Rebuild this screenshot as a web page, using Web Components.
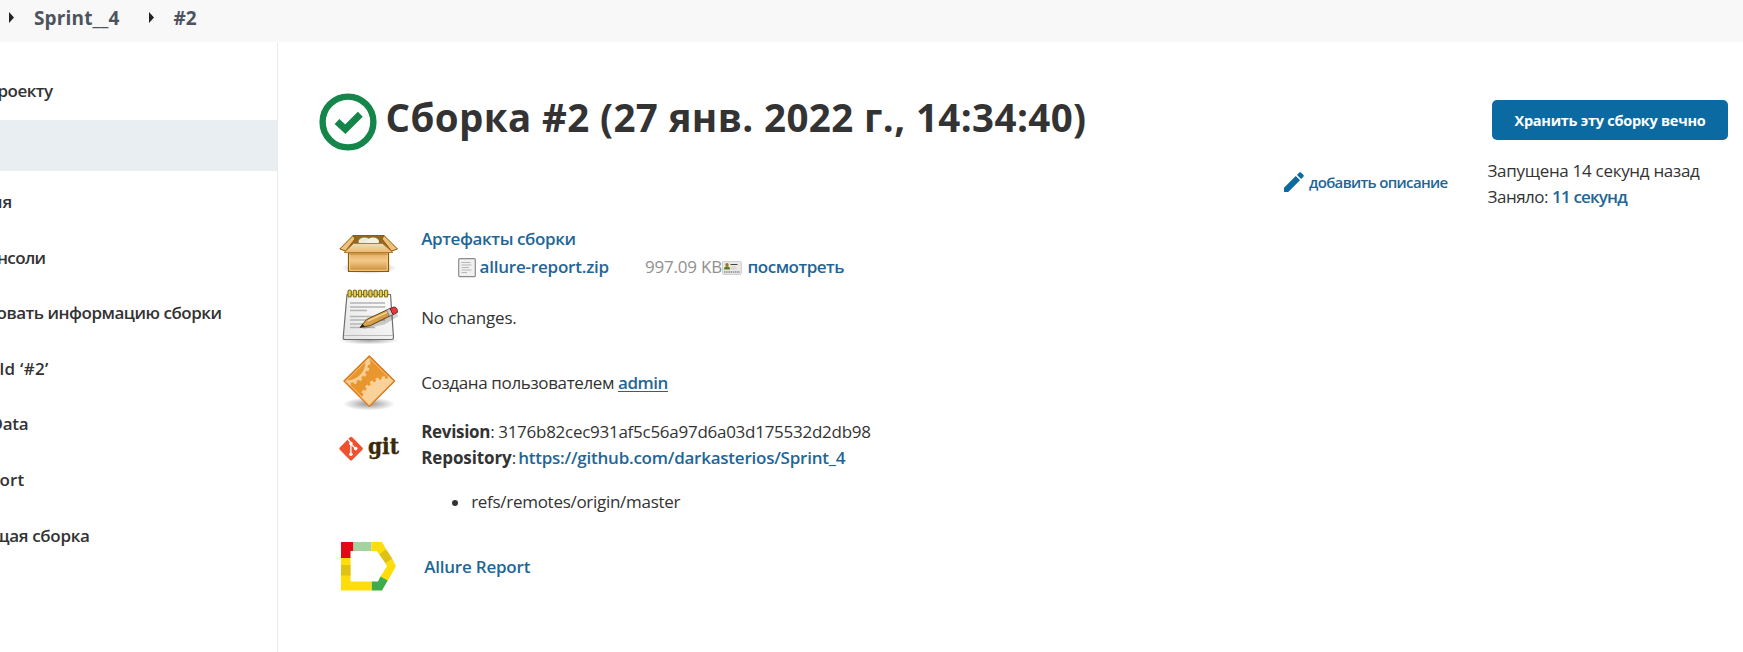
<!DOCTYPE html>
<html lang="ru">
<head>
<meta charset="utf-8">
<title>Сборка #2</title>
<style>
html,body{margin:0;height:100%;overflow:hidden;background:#fff}
body{font-family:"Open Sans","Noto Sans",sans-serif;color:#333}
</style>
</head>
<body>
<build-page></build-page>
<script>
const define = (name, html, ready) => customElements.define(name, class extends HTMLElement {
  constructor() {
    super();
    this.attachShadow({ mode: 'open' });
    const t = document.createElement('template');
    t.innerHTML = html;
    this.shadowRoot.append(t.content.cloneNode(true));
  }
  connectedCallback() { if (ready) ready(this); }
});

// A run of text tracked so that it fills the width given in "w".
define('fit-text', `<style>
:host{display:inline-block;white-space:pre;flex:none;line-height:26px;height:26px;font-size:17px}
:host([link]){color:#1f6696;font-weight:600}
:host([strong]){font-weight:700}
:host([under]) span{text-decoration:underline;text-decoration-thickness:1px;text-underline-offset:2px}
</style><span><slot></slot></span>`, el => {
  const w = +el.getAttribute('w');
  const span = el.shadowRoot.querySelector('span');
  const natural = span.getBoundingClientRect().width;
  span.style.letterSpacing = ((w - natural) / el.textContent.length) + 'px';
  el.style.width = w + 'px';
});

define('crumb-bar', `<style>
:host{display:flex;height:42px;background:#f8f8f8;color:#4d545d;box-sizing:border-box;padding:4px 0 0 9px;align-items:flex-start}
svg{width:5px;height:11px;margin-top:8px;flex:none}
fit-text{font-size:19px;font-weight:700;margin-top:1px}
.a{margin:1px 29px 0 20px}.b{margin-left:20px}
</style>
<svg viewBox="0 0 5 11"><path d="M0 0L5 5.5L0 11Z" fill="#222"/></svg>
<fit-text class="a" w="85.5">Sprint__4</fit-text>
<svg viewBox="0 0 5 11"><path d="M0 0L5 5.5L0 11Z" fill="#222"/></svg>
<fit-text class="b" w="23">#2</fit-text>`);

define('side-item', `<style>
:host{display:flex;height:51px;align-items:center;overflow:hidden;font-weight:600;padding-top:2px;box-sizing:border-box}
:host([active]){background:#e9eef2}
</style><slot></slot>`);

define('side-panel', `<style>
:host{display:flex;flex-direction:column;gap:4.6px;width:277px;flex:none;box-sizing:content-box;border-right:1px solid #e9eaec;padding-top:22.4px}
</style>
<side-item><fit-text w="55" style="margin-left:-2.5px">роекту</fit-text></side-item>
<side-item active></side-item>
<side-item><fit-text w="21" style="margin-left:-9px">ия</fit-text></side-item>
<side-item><fit-text w="48.5" style="margin-left:-3px">нсоли</fit-text></side-item>
<side-item><fit-text w="225" style="margin-left:-3.5px">овать информацию сборки</fit-text></side-item>
<side-item><fit-text w="49" style="margin-left:-.5px">ld ‘#2’</fit-text></side-item>
<side-item><fit-text w="38" style="margin-left:-9.5px">Data</fit-text></side-item>
<side-item><fit-text w="25" style="margin-left:-.5px">ort</fit-text></side-item>
<side-item><fit-text w="96" style="margin-left:-6.5px">щая сборка</fit-text></side-item>`);

define('build-title', `<style>
:host{display:flex;height:58px;align-items:flex-start}
svg{width:58px;height:58px;flex:none}
fit-text{font-size:38.5px;line-height:50px;height:50px;font-weight:700;margin:-1px 0 0 8.5px}
</style>
<svg viewBox="0 0 58 58"><circle cx="29" cy="29" r="25.4" fill="none" stroke="#15864a" stroke-width="6.4"/><path d="M18 28.500L26.300 36.200L41.300 21.200" fill="none" stroke="#15864a" stroke-width="7"/></svg>
<fit-text w="701">Сборка #2 (27 янв. 2022 г., 14:34:40)</fit-text>`);

define('build-row', `<style>
:host{display:flex}
.i{width:82.200px;flex:none}
.t{flex:1;min-width:0;padding-top:1px}
</style><div class="i"><slot name="icon"></slot></div><div class="t"><slot></slot></div>`);

const icon = (name, body) => define(name, `<style>:host{display:block;width:62px;height:64px}svg{display:block;overflow:visible}text{font:bold 22.500px "DejaVu Serif",serif}</style><svg width="62" height="64" viewBox="0 0 62 64">${body}</svg>`);

icon('icon-box', `<defs><linearGradient id="f" x2="0" y2="1"><stop stop-color="#dda04c"/><stop offset=".5" stop-color="#f3c989"/><stop offset="1" stop-color="#c98a38"/></linearGradient>
<linearGradient id="l" x2="0" y2="1"><stop stop-color="#f7dcae"/><stop offset="1" stop-color="#e8b873"/></linearGradient>
<radialGradient id="s"><stop stop-color="#000" stop-opacity=".4"/><stop offset="1" stop-color="#000" stop-opacity="0"/></radialGradient></defs>
<g transform="translate(0 -2)"><ellipse cx="30" cy="45" rx="28" ry="6" fill="url(#s)"/>
<path d="M14 12.500L45 12.500L53 28L6 28Z" fill="#9a6520" stroke="#8f5902"/>
<ellipse cx="25.500" cy="18.500" rx="6" ry="4" fill="#eee9df"/><ellipse cx="34" cy="18.500" rx="6" ry="4" fill="#f5f1e8"/>
<path d="M14 12.500L.8 26L6.500 28L16 16Z" fill="#edc27e" stroke="#8f5902"/><path d="M45 12.500L58.500 26L52.500 28L43 16Z" fill="#edc27e" stroke="#8f5902"/>
<path d="M9.500 27H49.500V48.500H9.500Z" fill="url(#f)" stroke="#8f5902" stroke-linejoin="round" stroke-width="1.200"/><path d="M10.700 29V47.300H48.300V29" fill="none" stroke="#f5d08f"/>
<path d="M14.500 20.500H43.500L54 29.500H5Z" fill="url(#l)" stroke="#b57a2a" stroke-linejoin="round"/><path d="M10 31H49" stroke="#9c6519" stroke-width="1" opacity=".6"/></g>`);

icon('icon-notes', `<defs><linearGradient id="p" x1="1" y1="0" x2="0" y2="1"><stop stop-color="#fff"/><stop offset="1" stop-color="#e4e4e4"/></linearGradient><linearGradient id="w" x2="1" y2="1"><stop stop-color="#f9d58d"/><stop offset="1" stop-color="#b96f16"/></linearGradient>
<radialGradient id="s"><stop stop-color="#000" stop-opacity=".35"/><stop offset="1" stop-color="#000" stop-opacity="0"/></radialGradient></defs>
<ellipse cx="30" cy="51.500" rx="30" ry="4" fill="url(#s)"/>
<path d="M8 5.500H51.500L54.500 48.500Q54.500 50.500 53 50.500H6Q4 50.500 4.200 48.500Z" fill="url(#p)" stroke="#6d6f6b" stroke-width="1.200" stroke-linejoin="round"/><path d="M5 46.500H54" stroke="#bbb"/>
<path d="M11 14H46M11 18H46M11 21.500H28M11 27.500H46M11 31H46M11 35H30M11 38.500H36" stroke="#b3b5b2" stroke-width="1.300"/>
<g fill="#e6d14e" stroke="#83701b" stroke-width="1.200">${[9,14.2,19.4,24.6,29.8,35,40.2,45.4].map(x => `<rect x="${x}" y="1" width="3.300" height="7" rx="1.600"/>`).join('')}</g>
<path d="M24 37.500L45 33L58 25" stroke="#000" stroke-opacity=".18" stroke-width="5" fill="none"/>
<path d="M21 38.500L27.500 30.500L51 19.500L54 25.500L31.500 36.500Z" fill="url(#w)" stroke="#68450d" stroke-linejoin="round"/><path d="M29 32L52 21.500" stroke="#f6dc9a" stroke-width="1.200"/>
<path d="M21 38.500L23.500 35L26 37.800Z" fill="#222"/>
<path d="M47.500 21.200L51 19.500L54 25.500L50.500 27.200Z" fill="#ccc" stroke="#666" stroke-width=".7"/><path d="M51 19.500L55 18Q59 18.500 58.300 23.500L54 25.500Z" fill="#e33b40" stroke="#7c2223"/>`);

icon('icon-gear', `<defs><radialGradient id="s"><stop stop-color="#000" stop-opacity=".42"/><stop offset="1" stop-color="#000" stop-opacity="0"/></radialGradient><clipPath id="c"><path d="M30.300 2.500L55.300 27L30.300 52L5.500 27Z"/></clipPath></defs>
<ellipse cx="30" cy="50" rx="26" ry="6.500" fill="url(#s)"/>
<path d="M30.300 1.500L56 27L30.300 53L4.500 27Z" fill="#e9962e"/>
<g clip-path="url(#c)" fill="none"><circle cx="8" cy="8" r="19.800" stroke="#f7ce94" stroke-width="2.800"/><circle cx="8" cy="8" r="22" stroke="#f7ce94" stroke-width="2.600" stroke-dasharray="3 3.100"/>
<circle cx="48" cy="50" r="25.500" fill="#f9d29a"/><circle cx="48" cy="50" r="26.300" stroke="#f9d29a" stroke-width="3" stroke-dasharray="3.200 3"/></g>
<path d="M30.300 2L55.600 27L30.300 52.400L5 27Z" fill="none" stroke="#d9791d" stroke-width="1.300" stroke-linejoin="round"/><path d="M30.300 4L53.600 27L30.300 50.400L7 27Z" fill="none" stroke="#f8c682" stroke-width=".9"/>`);

icon('icon-git', `<g transform="translate(-.7 0)"><rect x="4" y="21.800" width="17.600" height="17.600" rx="1.600" transform="rotate(45 12.800 30.600)" fill="#f0502f"/>
<path d="M9.300 21L12.600 24.500V36.500M12.600 26L17.300 30.500" stroke="#fff" stroke-width="1.300" fill="none"/><circle cx="12.600" cy="25.500" r="1.800" fill="#fff"/><circle cx="12.600" cy="36.200" r="1.800" fill="#fff"/><circle cx="17.400" cy="30.600" r="1.800" fill="#fff"/></g>
<text x="29" y="36" fill="#3a2a08" stroke="#3a2a08" stroke-width=".4" textLength="31" lengthAdjust="spacingAndGlyphs">git</text>`);

icon('icon-allure', `<g transform="translate(2 1)"><path d="M0 0H12.500V9H9.500V16H0Z" fill="#e20a17"/><path d="M12.500 0H30.500V9H12.500Z" fill="#a5d3a0"/><path d="M30.500 0H41L45 7L38 12L35.500 9H30.500Z" fill="#ffdd0a"/><path d="M45 7L51.500 17L44.500 21.500L38 12Z" fill="#dfc312"/><path d="M51.500 17L55 24.300L46.700 39L39.500 34.500L46 24.300L44.500 21.500Z" fill="#ffdd0a"/><path d="M39.500 34.500L46.700 38.500L41 48.500H30.500V39.500H37Z" fill="#3ead49"/><path d="M0 16H9.500V39.500H30.500V48.500H0Z" fill="#ffdd0a"/><path d="M0 23H9.500V33.500H0Z" fill="#dfc312"/></g>`);

define('build-log', `<style>
:host{display:flex;flex-direction:column}
.l{display:flex;height:26px;align-items:flex-start}
.art{padding:2px 0 0 36.500px}
svg{flex:none}
.gray{color:#909090}
.dot{width:6px;height:6px;border-radius:50%;background:#333;margin:11px 13px 0 31px}
</style>
<build-row style="height:64px"><icon-box slot="icon"></icon-box>
 <div class="l"><fit-text link w="154.500">Артефакты сборки</fit-text></div>
 <div class="l art"><svg width="18" height="20" viewBox="0 0 18 20" style="margin-top:4px"><rect x=".7" y=".7" width="16.600" height="18" rx="1" fill="#f1f1f1" stroke="#8b8c89" stroke-width="1.200"/><path d="M3.500 4.500H12.500M3.500 7H13.500M3.500 9.500H11M3.500 12H13.500M3.500 14.500H9" stroke="#b6b6b6" stroke-width="1"/></svg>
 <fit-text link w="129.500" style="margin:0 36px 0 3.800px">allure-report.zip</fit-text><fit-text class="gray" w="77">997.09 KB</fit-text>
 <svg width="20" height="14" viewBox="0 0 20 14" style="margin:7px 5px 0 .5px"><rect x=".4" y=".4" width="19" height="13" rx="1.500" fill="#e9e9e8" stroke="#c2c2c0" stroke-width=".8"/><circle cx="5" cy="3.700" r="1.700" fill="#9b7327"/><path d="M2 8.500Q2 5.200 5 5.200Q8 5.200 8 8.500Z" fill="#5f7d1c"/><path d="M8.500 3.500H15.500" stroke="#444"/><path d="M8.500 6H14M8.500 7.800H15" stroke="#c7c7c7" stroke-width=".8"/><path d="M2 11H18" stroke="#8a8a8a" stroke-width="1.500" stroke-dasharray="1.500 .7"/></svg>
 <fit-text link w="96.500">посмотреть</fit-text></div></build-row>
<build-row style="height:65px"><icon-notes slot="icon"></icon-notes><div class="l" style="padding-top:15px"><fit-text w="95.500">No changes.</fit-text></div></build-row>
<build-row style="height:64px"><icon-gear slot="icon"></icon-gear><div class="l" style="padding-top:15px"><fit-text w="193" style="margin-right:3.800px">Создана пользователем</fit-text><fit-text link under w="50">admin</fit-text></div></build-row>
<build-row style="height:123px"><icon-git slot="icon"></icon-git>
 <div class="l"><fit-text strong w="69">Revision</fit-text><fit-text w="8">: </fit-text><fit-text w="372.500">3176b82cec931af5c56a97d6a03d175532d2db98</fit-text></div>
 <div class="l"><fit-text strong w="90.500">Repository</fit-text><fit-text w="6.500">: </fit-text><fit-text link w="327">https://github.com/darkasterios/Sprint_4</fit-text></div>
 <div class="l" style="margin-top:18px"><span class="dot"></span><fit-text w="209">refs/remotes/origin/master</fit-text></div></build-row>
<build-row><icon-allure slot="icon"></icon-allure><div class="l" style="padding:12px 0 0 3px"><fit-text link w="106">Allure Report</fit-text></div></build-row>`);

define('build-meta', `<style>
:host{display:flex;width:459px;flex:none}
.d{width:203.500px;flex:none;display:flex;padding-top:127px;box-sizing:border-box}
.d svg{margin:3px 5px 0 0;flex:none}
button{all:unset;box-sizing:border-box;display:flex;align-items:center;justify-content:center;width:236px;height:40px;padding-top:2px;margin:58px 0 18px 4.500px;background:#0b6aa2;border-radius:5px;color:#fff}
button fit-text{font-size:14.500px;font-weight:700}
.l{display:flex;height:26px}
</style>
<div class="d"><svg width="20" height="20" viewBox="0 0 20 20"><path d="M0 15.800L11.800 4L16 8.200L4.200 20H0ZM13 2.900L15.300.6Q16.200-.2 17 .6L19.500 3Q20.200 3.800 19.400 4.700L17.100 7Z" fill="#0b6aa2"/></svg>
<fit-text link w="138.500" style="font-size:15px">добавить описание</fit-text></div>
<div><button><fit-text w="191">Хранить эту сборку вечно</fit-text></button>
<div class="l"><fit-text w="212">Запущена 14 секунд назад</fit-text></div>
<div class="l"><fit-text w="64.500">Заняло: </fit-text><fit-text link w="75">11 секунд</fit-text></div></div>`);

define('build-page', `<style>
:host{display:flex;flex-direction:column;height:652px;width:1743px;overflow:hidden}
.m{display:flex;flex:1;min-height:0}
main{flex:1;min-width:0;padding:51px 0 0 41px}
build-log{margin:74px 0 0 20px}
</style><crumb-bar></crumb-bar><div class="m"><side-panel></side-panel><main><build-title></build-title><build-log></build-log></main><build-meta></build-meta></div>`);
</script>
</body>
</html>
